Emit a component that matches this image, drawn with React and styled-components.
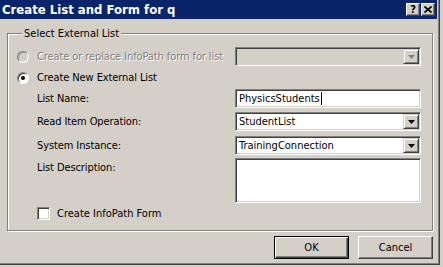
import React from 'react';
import styled, { createGlobalStyle } from 'styled-components';

const GlobalStyle = createGlobalStyle`
  html, body {
    margin: 0;
    padding: 0;
  }
  body {
    background: #d4d0c8;
    font-family: Tahoma, "DejaVu Sans Condensed", "Liberation Sans", sans-serif;
    font-size: 11px;
    color: #000;
    overflow: hidden;
  }
`;

const Window = styled.div`
  width: 440px;
  height: 265px;
  box-sizing: border-box;
  padding: 0 2px 2px 0;
  background: #d4d0c8;
  border-right: 1px solid #404040;
  border-bottom: 1px solid #404040;
  box-shadow: inset -1px -1px 0 #808080;
  display: flex;
  flex-direction: column;
`;

const TitleBar = styled.div`
  height: 19px;
  background: #0a246a;
  display: flex;
  align-items: center;
  padding: 0 2px 0 2px;
`;

const Title = styled.div`
  flex: 1;
  color: #fff;
  font-weight: bold;
  font-size: 13px;
  white-space: nowrap;
`;

const CaptionButton = styled.div`
  width: 14px;
  height: 13px;
  box-sizing: border-box;
  margin-left: ${(p) => p.$gap || 0}px;
  background: #d4d0c8;
  border-top: 1px solid #fff;
  border-left: 1px solid #fff;
  border-right: 1px solid #404040;
  border-bottom: 1px solid #404040;
  box-shadow: inset -1px -1px 0 #808080;
  display: flex;
  align-items: center;
  justify-content: center;
  font-weight: bold;
  font-size: 11px;
  line-height: 1;
`;

const Body = styled.div`
  flex: 1;
  display: flex;
  flex-direction: column;
  padding: 8px 4px 0 7px;
`;

const GroupBox = styled.fieldset`
  margin: 0;
  padding: 7px 10px 10px 9px;
  min-width: 0;
  border: 1px solid #808080;
  box-shadow: inset 1px 1px 0 #fff, 1px 1px 0 #fff;
`;

const Legend = styled.legend`
  margin-left: 5px;
  padding: 0 2px;
  line-height: 13px;
  background: #d4d0c8;
`;

const Row = styled.div`
  display: grid;
  grid-template-columns: 20px 198px 186px;
  align-items: ${(p) => p.$align || 'center'};
  height: ${(p) => p.$h}px;
  margin-top: ${(p) => p.$gap || 0}px;
`;

const Label = styled.div`
  grid-column: 2;
  white-space: nowrap;
  letter-spacing: -0.1px;
  color: ${(p) => (p.$disabled ? '#808080' : '#000')};
  text-shadow: ${(p) => (p.$disabled ? '1px 1px 0 #fff' : 'none')};
  padding-top: ${(p) => p.$pt || 0}px;
`;

const Radio = styled.div`
  grid-column: 1;
  width: 12px;
  height: 12px;
  box-sizing: border-box;
  border-radius: 50%;
  border: 1px solid;
  border-color: #808080 #fff #fff #808080;
  background: ${(p) => (p.$disabled ? '#d4d0c8' : '#fff')};
  box-shadow: inset 1px 1px 0 ${(p) => (p.$disabled ? '#a0a0a0' : '#404040')};
  display: flex;
  align-items: center;
  justify-content: center;
  &::after {
    content: '';
    width: 4px;
    height: 4px;
    border-radius: 50%;
    background: #000;
    display: ${(p) => (p.$checked ? 'block' : 'none')};
  }
`;

const Sunken = styled.div`
  grid-column: 3;
  box-sizing: border-box;
  height: ${(p) => p.$h || 19}px;
  border-top: 1px solid #808080;
  border-left: 1px solid #808080;
  border-right: 1px solid #fff;
  border-bottom: 1px solid #fff;
  box-shadow: inset 1px 1px 0 #404040, inset -1px -1px 0 #d4d0c8;
  background: ${(p) => (p.$disabled ? '#d4d0c8' : '#fff')};
  display: flex;
  align-items: ${(p) => (p.$top ? 'flex-start' : 'center')};
  padding: 2px 2px 2px 3px;
  white-space: nowrap;
`;

const Value = styled.div`
  flex: 1;
  display: flex;
  align-items: center;
`;

const Caret = styled.span`
  display: inline-block;
  width: 1px;
  height: 13px;
  background: #000;
  margin-left: 1px;
`;

const DropButton = styled.div`
  width: 16px;
  height: 15px;
  box-sizing: border-box;
  margin-right: -1px;
  background: #d4d0c8;
  border-top: 1px solid #d4d0c8;
  border-left: 1px solid #d4d0c8;
  border-right: 1px solid #404040;
  border-bottom: 1px solid #404040;
  box-shadow: inset 1px 1px 0 #fff, inset -1px -1px 0 #808080;
  display: flex;
  align-items: center;
  justify-content: center;
`;

const CheckBox = styled.div`
  width: 13px;
  height: 13px;
  box-sizing: border-box;
  border-top: 1px solid #808080;
  border-left: 1px solid #808080;
  border-right: 1px solid #fff;
  border-bottom: 1px solid #fff;
  box-shadow: inset 1px 1px 0 #404040, inset -1px -1px 0 #d4d0c8;
  background: #fff;
`;

const CheckRow = styled.div`
  grid-column: 2 / 4;
  display: flex;
  align-items: center;
  gap: 7px;
`;

const ButtonBar = styled.div`
  display: flex;
  justify-content: flex-end;
  gap: 9px;
  margin-top: 5px;
`;

const Button = styled.div`
  width: 75px;
  height: 23px;
  box-sizing: border-box;
  display: flex;
  align-items: center;
  justify-content: center;
  background: #d4d0c8;
  border: 1px solid;
  border-color: ${(p) => (p.$default ? '#000' : '#fff #404040 #404040 #fff')};
  box-shadow: ${(p) =>
    p.$default
      ? 'inset 1px 1px 0 #fff, inset -1px -1px 0 #404040, inset -2px -2px 0 #808080'
      : 'inset -1px -1px 0 #808080'};
`;

const Arrow = ({ color = '#000' }) => (
  <svg width="7" height="4" viewBox="0 0 7 4">
    <path d="M0 0h7L3.5 4z" fill={color} />
  </svg>
);

const CloseGlyph = () => (
  <svg width="8" height="7" viewBox="0 0 8 7">
    <path d="M0.5 0.5L7.5 6.5M7.5 0.5L0.5 6.5" stroke="#000" strokeWidth="1.6" />
  </svg>
);

export default function App() {
  return (
    <>
      <GlobalStyle />
      <Window>
        <TitleBar>
          <Title>Create List and Form for q</Title>
          <CaptionButton>?</CaptionButton>
          <CaptionButton $gap={1}>
            <CloseGlyph />
          </CaptionButton>
        </TitleBar>
        <Body>
          <GroupBox>
            <Legend>Select External List</Legend>
            <Row $h={19}>
              <Radio $disabled />
              <Label $disabled>Create or replace InfoPath form for list</Label>
              <Sunken $disabled>
                <Value />
                <DropButton>
                  <Arrow color="#808080" />
                </DropButton>
              </Sunken>
            </Row>
            <Row $h={23}>
              <Radio $checked />
              <Label>Create New External List</Label>
            </Row>
            <Row $h={19}>
              <Label>List Name:</Label>
              <Sunken>
                <Value>
                  PhysicsStudents
                  <Caret />
                </Value>
              </Sunken>
            </Row>
            <Row $h={19} $gap={4}>
              <Label>Read Item Operation:</Label>
              <Sunken>
                <Value>StudentList</Value>
                <DropButton>
                  <Arrow />
                </DropButton>
              </Sunken>
            </Row>
            <Row $h={19} $gap={5}>
              <Label>System Instance:</Label>
              <Sunken>
                <Value>TrainingConnection</Value>
                <DropButton>
                  <Arrow />
                </DropButton>
              </Sunken>
            </Row>
            <Row $h={45} $gap={3} $align="start">
              <Label $pt={3}>List Description:</Label>
              <Sunken $h={45} $top />
            </Row>
            <Row $h={13} $gap={4}>
              <CheckRow>
                <CheckBox />
                Create InfoPath Form
              </CheckRow>
            </Row>
          </GroupBox>
          <ButtonBar>
            <Button $default>OK</Button>
            <Button>Cancel</Button>
          </ButtonBar>
        </Body>
      </Window>
    </>
  );
}
